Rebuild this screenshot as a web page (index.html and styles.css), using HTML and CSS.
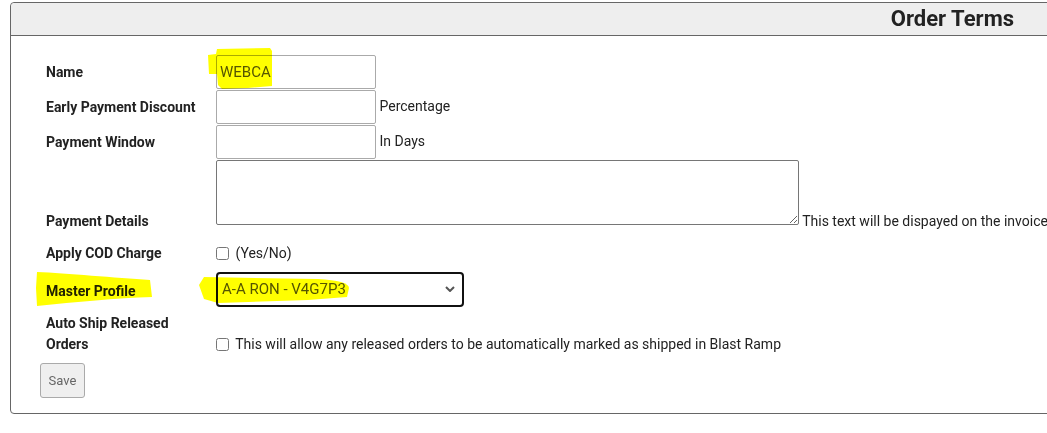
FILE: index.html
```html
<!DOCTYPE html>
<html lang="en">
<head>
<meta charset="utf-8">
<title>Order Terms</title>
<link rel="stylesheet" href="styles.css">
</head>
<body>
<div class="panel">
  <div class="panel-head"><h2 class="panel-title">Order Terms</h2></div>
  <form class="panel-body">
    <div class="row row-input">
      <label class="label">Name</label>
      <div class="cell">
        <span class="mark-wrap">
          <input class="field" type="text" value="WEBCA">
          <svg class="mark mark-name" viewBox="0 0 66 42" width="66" height="42"><path d="M0,7 L8,6 L9,1 L62,0 L64,3 L64,38 L40,40 L14,41 L10,37 L9,26 L1,26 Z"/></svg>
        </span>
      </div>
    </div>
    <div class="row row-input">
      <label class="label">Early Payment Discount</label>
      <div class="cell"><input class="field" type="text"> Percentage</div>
    </div>
    <div class="row row-input">
      <label class="label">Payment Window</label>
      <div class="cell"><input class="field" type="text"> In Days</div>
    </div>
    <div class="row row-area">
      <label class="label">Payment Details</label>
      <div class="cell"><textarea class="area"></textarea> This text will be dispayed on the invoice</div>
    </div>
    <div class="row row-check">
      <label class="label">Apply COD Charge</label>
      <div class="cell"><input class="check" type="checkbox"> (Yes/No)</div>
    </div>
    <div class="row row-select">
      <span class="label label-master mark-wrap">Master Profile
        <svg class="mark mark-label" viewBox="0 0 118 38" width="118" height="38"><path d="M1,2 C30,3 80,8 114,10 L116,27 C80,28 40,32 1,36 L0,18 Z"/></svg>
      </span>
      <div class="cell">
        <span class="mark-wrap">
          <select class="select"><option>A-A RON - V4G7P3</option></select>
          <svg class="mark mark-select" viewBox="0 0 152 30" width="152" height="30"><path d="M1,11 L6,3 L120,5 C140,6 151,9 151,14 L149,23 L110,26 L20,29 L6,25 Z"/></svg>
        </span>
      </div>
    </div>
    <div class="row row-auto">
      <label class="label label-wrap">Auto Ship Released Orders</label>
      <div class="cell"><input class="check" type="checkbox"> This will allow any released orders to be automatically marked as shipped in Blast Ramp</div>
    </div>
    <div class="actions">
      <button class="btn" type="button" disabled>Save</button>
    </div>
  </form>
</div>
</body>
</html>
```
FILE: styles.css
```css
html, body {
  margin: 0;
  padding: 0;
  overflow: hidden;
  background: #fff;
}
body {
  font-family: Roboto, "Noto Sans", sans-serif;
  font-size: 14px;
  color: #222;
}
.panel {
  margin: 2px 0 0 10px;
  width: 1045px;
  border: 1px solid #666;
  border-radius: 4px;
  box-sizing: border-box;
}
.panel-head {
  display: flex;
  justify-content: flex-end;
  height: 32px;
  padding-right: 40px;
  background: #eee;
  border-bottom: 1px solid #666;
  border-radius: 4px 4px 0 0;
}
.panel-title {
  margin: 0;
  font-size: 22px;
  font-weight: 700;
  line-height: 32px;
  color: #222;
}
.panel-body {
  display: flex;
  flex-direction: column;
  padding: 18px 0 15px 29px;
}
.row {
  display: flex;
}
.label {
  width: 170px;
  padding-left: 6px;
  font-weight: 700;
  color: #222;
  flex: none;
}
.cell {
  white-space: nowrap;
}
.row-input {
  height: 35px;
  align-items: center;
}
.row-input .cell {
  line-height: 35px;
}
.row-area {
  margin-top: 1px;
  align-items: baseline;
}
.row-check {
  margin-top: 14px;
  height: 20px;
  align-items: center;
}
.row-select {
  margin-top: 9px;
  height: 34px;
  align-items: center;
}
.label-master {
  margin-top: 3px;
}
.row-auto {
  margin-top: 7px;
  align-items: flex-end;
  line-height: 21px;
}
.label-wrap {
  width: 150px;
  margin-right: 20px;
}
.field {
  box-sizing: border-box;
  width: 160px;
  height: 34px;
  margin: 0;
  padding: 0 3px;
  border: 1px solid #aaa;
  border-radius: 2px;
  font-family: Roboto, sans-serif;
  font-size: 15px;
  color: #555;
  vertical-align: middle;
}
.area {
  box-sizing: border-box;
  width: 583px;
  height: 65px;
  margin: 0;
  border: 1px solid #767676;
  border-radius: 2px;
  vertical-align: 1px;
  resize: both;
}
.check {
  width: 13px;
  height: 13px;
  margin: 0 3px 0 0;
  vertical-align: -2px;
}
.select {
  box-sizing: border-box;
  width: 248px;
  height: 35px;
  margin: 0;
  padding: 0 24px 0 4px;
  border: 2px solid #111;
  border-radius: 4px;
  font-family: Roboto, sans-serif;
  font-size: 15px;
  color: #555;
  background: #fff url("data:image/svg+xml,%3Csvg xmlns='http://www.w3.org/2000/svg' width='10' height='6' viewBox='0 0 10 6'%3E%3Cpath d='M1 1 L5 5 L9 1' fill='none' stroke='%23555' stroke-width='2'/%3E%3C/svg%3E") no-repeat right 7px center;
  -webkit-appearance: none;
  appearance: none;
  vertical-align: middle;
}
.mark-wrap {
  position: relative;
  display: inline-block;
}
.mark {
  position: absolute;
  fill: #ffff00;
  mix-blend-mode: multiply;
  pointer-events: none;
}
.mark-name {
  left: -8px;
  top: -6px;
}
.mark-label {
  left: -4px;
  top: -13px;
}
.mark-select {
  left: -18px;
  top: 2px;
}
.actions {
  margin-top: 8px;
}
.btn {
  box-sizing: border-box;
  width: 45px;
  height: 35px;
  padding: 0;
  background: #efefef;
  border: 1px solid #aaa;
  border-radius: 3px;
  font-family: Roboto, sans-serif;
  font-size: 13px;
  color: #666;
}
```
